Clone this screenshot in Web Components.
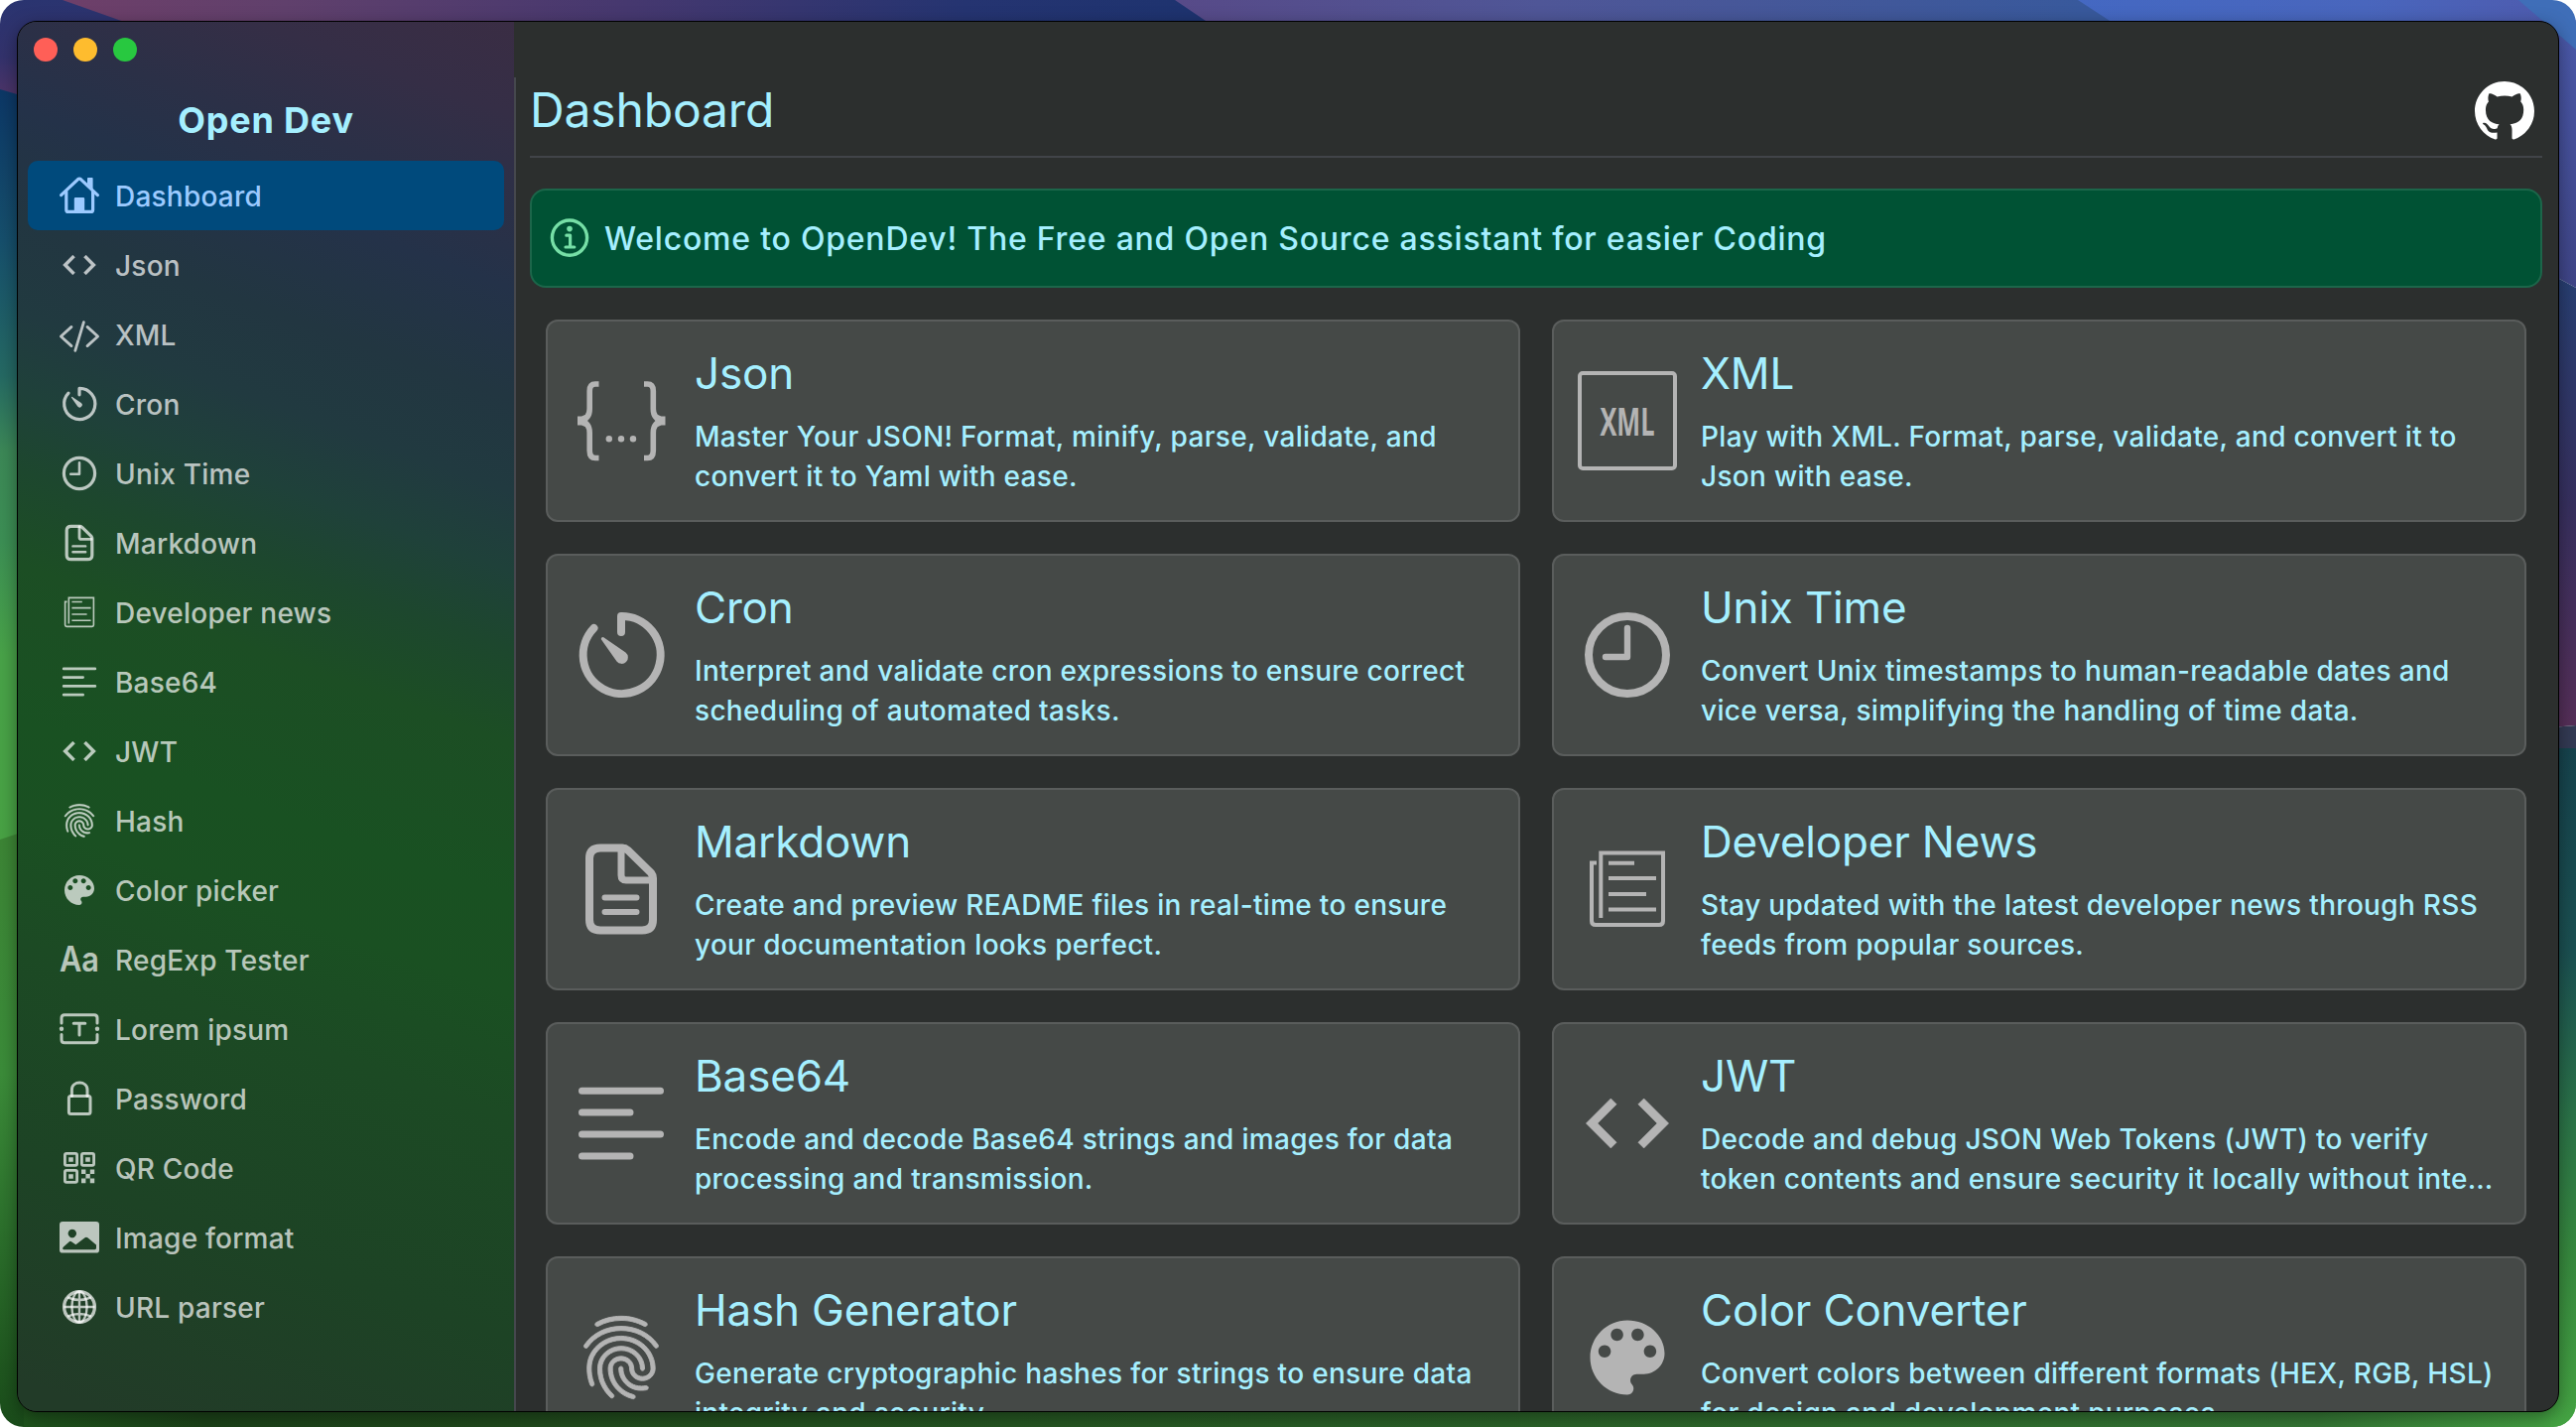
<!DOCTYPE html>
<html lang="en">
<head>
<meta charset="utf-8">
<title>Open Dev</title>
<style>
  html, body { margin: 0; width: 100%; height: 100%; overflow: hidden; background: #fff; }
  body { font-family: Inter, "Liberation Sans", sans-serif; }
</style>
</head>
<body>
<od-desktop>
  <od-window>
    <od-sidebar slot="sidebar" heading="Open Dev">
      <od-nav-item icon="home" active>Dashboard</od-nav-item>
      <od-nav-item icon="code">Json</od-nav-item>
      <od-nav-item icon="code-slash">XML</od-nav-item>
      <od-nav-item icon="timer">Cron</od-nav-item>
      <od-nav-item icon="clock">Unix Time</od-nav-item>
      <od-nav-item icon="document">Markdown</od-nav-item>
      <od-nav-item icon="news">Developer news</od-nav-item>
      <od-nav-item icon="lines">Base64</od-nav-item>
      <od-nav-item icon="code">JWT</od-nav-item>
      <od-nav-item icon="fingerprint">Hash</od-nav-item>
      <od-nav-item icon="palette">Color picker</od-nav-item>
      <od-nav-item icon="letters">RegExp Tester</od-nav-item>
      <od-nav-item icon="textbox">Lorem ipsum</od-nav-item>
      <od-nav-item icon="lock">Password</od-nav-item>
      <od-nav-item icon="qr">QR Code</od-nav-item>
      <od-nav-item icon="image">Image format</od-nav-item>
      <od-nav-item icon="globe">URL parser</od-nav-item>
    </od-sidebar>
    <od-page heading="Dashboard">
      <od-alert slot="notice">Welcome to OpenDev! The Free and Open Source assistant for easier Coding</od-alert>
      <od-card icon="json" heading="Json">Master Your JSON! Format, minify, parse, validate, and<br>convert it to Yaml with ease.</od-card>
      <od-card icon="xml" heading="XML">Play with XML. Format, parse, validate, and convert it to<br>Json with ease.</od-card>
      <od-card icon="timer" heading="Cron">Interpret and validate cron expressions to ensure correct<br>scheduling of automated tasks.</od-card>
      <od-card icon="clock" heading="Unix Time">Convert Unix timestamps to human-readable dates and<br>vice versa, simplifying the handling of time data.</od-card>
      <od-card icon="document" heading="Markdown">Create and preview README files in real-time to ensure<br>your documentation looks perfect.</od-card>
      <od-card icon="news" heading="Developer News">Stay updated with the latest developer news through RSS<br>feeds from popular sources.</od-card>
      <od-card icon="lines" heading="Base64">Encode and decode Base64 strings and images for data<br>processing and transmission.</od-card>
      <od-card icon="code" heading="JWT">Decode and debug JSON Web Tokens (JWT) to verify<br>token contents and ensure security it locally without inte…</od-card>
      <od-card icon="fingerprint" heading="Hash Generator">Generate cryptographic hashes for strings to ensure data<br>integrity and security.</od-card>
      <od-card icon="palette" heading="Color Converter">Convert colors between different formats (HEX, RGB, HSL)<br>for design and development purposes.</od-card>
    </od-page>
  </od-window>
</od-desktop>

<script>
const S = (w, extra = '') => `fill="none" stroke="currentColor" stroke-width="${w}" stroke-linecap="round" stroke-linejoin="round" ${extra}`;
const ICONS = {
  home: `<g ${S(8)}><path d="M4 49 46 9.5Q50 6 54 9.5L96 49"/><path d="M17 40V86Q17 91 22 91H79Q84 91 84 86V40"/></g><path fill="currentColor" d="M37 91V58Q37 55 40 55H60Q63 55 63 58V91ZM70 20V7Q70 5 72 5H82Q84 5 84 7V36Z"/>`,
  code: `<path fill="currentColor" transform="scale(4.1667)" stroke="currentColor" stroke-width=".12" d="M9.4 16.6 4.8 12l4.6-4.6L8 6l-6 6 6 6zm5.2 0 4.6-4.6-4.6-4.6L16 6l6 6-6 6z"/>`,
  'code-slash': `<g ${S(7)}><path d="M30 31 3.5 55 30 79M70 31 96.500 55 70 79M61 19 39.500 91"/></g>`,
  timer: `<path ${S(8)} d="M22.500 23A39 39 0 1 0 50 11V27"/><path fill="currentColor" d="M45.500 56.500 30 34.600a1.700 1.700 0 0 1 2.300-2.300L54.500 47.500a6.400 6.400 0 1 1-9 9z"/>`,
  clock: `<circle cx="50" cy="50" r="39" ${S(8)}/><path ${S(6.4)} d="M50 23V52H28"/>`,
  document: `<path ${S(8)} d="M51 8.500H29Q18 8.500 18 19V81Q18 91.500 29 91.500H71Q82 91.500 82 81V39Q82 36 80 33.500L57 11Q54 8.500 51 8.500"/><path ${S(7)} d="M50 10V36Q50 41 55 41H80"/><path ${S(6)} d="M33.500 58.500H65.500M33.500 73H65.500"/>`,
  news: `<path fill="none" stroke="currentColor" stroke-width="4" d="M19 23.500H14V82Q14 86 18 86H82Q86 86 86 82V13.500H23.300V79M31 23.700H57M31 39H79M31 55H69M31 70.500H79"/>`,
  lines: `<path ${S(7)} d="M10.500 17.200H89.500M10.500 39H59M10.500 61H89.500M10.500 83H59"/>`,
  fingerprint: `<path fill="currentColor" stroke="currentColor" stroke-width=".22" transform="scale(4.1667)" d="M17.810 4.470c-.08 0-.16-.02-.23-.06C15.660 3.420 14 3 12.010 3c-1.980 0-3.860.47-5.570 1.410-.24.13-.54.04-.68-.2-.13-.24-.04-.55.2-.68C7.820 2.520 9.860 2 12.010 2c2.130 0 3.990.47 6.030 1.520.25.13.34.43.21.67-.09.18-.26.28-.44.28zM3.500 9.720c-.1 0-.2-.03-.29-.09-.23-.16-.28-.47-.12-.7.99-1.400 2.250-2.500 3.750-3.270C9.980 4.040 14 4.030 17.150 5.650c1.500.77 2.760 1.860 3.750 3.250.16.22.11.54-.12.7-.23.16-.54.11-.7-.12-.9-1.260-2.040-2.250-3.390-2.940-2.870-1.470-6.540-1.470-9.400.01-1.360.7-2.500 1.700-3.400 2.960-.08.14-.23.21-.39.21zm6.250 12.070c-.13 0-.26-.05-.35-.15-.87-.87-1.340-1.430-2.010-2.640-.69-1.230-1.050-2.730-1.050-4.340 0-2.970 2.540-5.390 5.660-5.390s5.660 2.420 5.660 5.390c0 .28-.22.5-.5.5s-.5-.22-.5-.5c0-2.420-2.090-4.390-4.660-4.390-2.570 0-4.660 1.970-4.660 4.390 0 1.440.32 2.770.93 3.850.64 1.150 1.080 1.640 1.850 2.420.19.2.19.51 0 .71-.11.1-.24.15-.37.15zm7.170-1.850c-1.190 0-2.240-.3-3.100-.89-1.490-1.010-2.380-2.650-2.380-4.390 0-.28.22-.5.5-.5s.5.22.5.5c0 1.410.72 2.740 1.940 3.560.71.48 1.540.71 2.540.71.24 0 .64-.03 1.040-.1.27-.05.53.13.58.41.05.27-.13.53-.41.58-.57.11-1.070.12-1.210.12zM14.910 22c-.04 0-.09-.01-.13-.02-1.590-.44-2.630-1.030-3.720-2.100-1.400-1.390-2.170-3.240-2.170-5.220 0-1.620 1.380-2.940 3.080-2.940 1.700 0 3.080 1.320 3.080 2.940 0 1.070.93 1.940 2.080 1.940s2.080-.87 2.080-1.940c0-3.770-3.250-6.830-7.250-6.830-2.840 0-5.440 1.580-6.610 4.030-.39.81-.59 1.760-.59 2.800 0 .78.07 2.010.67 3.610.1.26-.03.55-.29.64-.26.1-.55-.04-.64-.29-.49-1.310-.73-2.610-.73-3.960 0-1.200.23-2.290.68-3.240 1.330-2.790 4.280-4.600 7.510-4.600 4.550 0 8.250 3.510 8.250 7.830 0 1.620-1.380 2.940-3.080 2.940s-3.080-1.320-3.080-2.940c0-1.070-.93-1.940-2.080-1.940s-2.080.87-2.080 1.940c0 1.710.66 3.310 1.870 4.510.95.94 1.860 1.460 3.270 1.850.27.07.42.35.35.61-.05.23-.26.38-.47.38z"/>`,
  palette: `<path fill="currentColor" transform="scale(4.1667)" d="M12 3c-4.970 0-9 4.030-9 9s4.030 9 9 9c.83 0 1.500-.67 1.500-1.500 0-.39-.15-.74-.39-1.010-.23-.26-.38-.61-.38-.99 0-.83.67-1.500 1.500-1.500H16c2.760 0 5-2.240 5-5 0-4.420-4.030-8-9-8zm-5.500 9c-.83 0-1.500-.67-1.500-1.500S5.670 9 6.500 9 8 9.670 8 10.500 7.330 12 6.500 12zm3-4C8.670 8 8 7.330 8 6.500S8.670 5 9.500 5s1.500.67 1.500 1.500S10.330 8 9.500 8zm5 0c-.83 0-1.500-.67-1.500-1.500S13.670 5 14.500 5s1.500.67 1.500 1.500S15.330 8 14.500 8zm3 4c-.83 0-1.500-.67-1.500-1.500S16.670 9 17.500 9s1.500.67 1.500 1.500-.67 1.500-1.500 1.500z"/>`,
  letters: `<text x="0" y="81" font-family="Inter" font-weight="600" font-size="88" textLength="100" lengthAdjust="spacingAndGlyphs" letter-spacing="0" fill="currentColor">Aa</text>`,
  textbox: `<g ${S(7.5)}><path d="M5 35V22Q5 14.500 12.500 14.500H87.500Q95 14.500 95 22V35M5 64V77Q5 84.500 12.500 84.500H87.500Q95 84.500 95 77V64M35.500 35.500H64.500M50 35.500V65"/></g><circle cx="5" cy="49.500" r="5.500" fill="currentColor"/><circle cx="95" cy="49.500" r="5.500" fill="currentColor"/>`,
  lock: `<g ${S(7.5)}><rect x="23.500" y="44" width="54" height="45" rx="5"/><path d="M31 44V28C31 4 70 4 70 28V44"/></g>`,
  qr: `<g fill="none" stroke="currentColor" stroke-width="7"><rect x="13.500" y="13.500" width="30.500" height="30" rx="4"/><rect x="56" y="13.500" width="30.500" height="30" rx="4"/><rect x="13.500" y="56" width="30.500" height="30" rx="4"/></g><path fill="currentColor" d="M23 23h11.500v11.500H23zM65.500 23H77v11.500H65.500zM23 65.500h11.500V77H23zM55 54h11v11H55zM77 54h11v11H77zM66 65h11v11H66zM55 76h11v12H55zM77 76h11v12H77z"/>`,
  image: `<path fill="currentColor" fill-rule="evenodd" d="M8 10H92Q100 10 100 18V81Q100 89 92 89H8Q0 89 0 81V18Q0 10 8 10ZM32 29.500a10.500 10.500 0 1 0 .01 0ZM8 78Q8 80.500 11 80.500H89Q92.500 80.500 92.500 76V69L71 50.500Q67 47.500 63 51L41 68 30 60.500Q27 58.500 24 61L10 74Q8 76 8 78Z"/>`,
  globe: `<g fill="none" stroke="currentColor" stroke-width="6"><circle cx="50" cy="50" r="38.500" stroke-width="8.500"/><ellipse cx="50" cy="50" rx="19" ry="39"/><path d="M50 11V89M11 50H89M20 26Q50 39 80 26M20 74Q50 61 80 74"/></g>`,
  json: `<g fill="none" stroke="currentColor" stroke-width="5.600"><path d="M27.500 13H24Q18.200 13 18.200 20V38Q18.200 48 9 50Q18.200 52 18.200 62V80Q18.200 87.500 24 87.500H27.500M73 13H76.500Q82.300 13 82.300 20V38Q82.300 48 91.500 50Q82.300 52 82.300 62V80Q82.300 87.500 76.500 87.500H73"/></g><path fill="currentColor" d="M6 45.500H10L16 43V57L10 54.500H6ZM94.500 45.500H90.500L84.500 43V57L90.500 54.500H94.500Z"/><g fill="currentColor"><circle cx="37.800" cy="68.300" r="3.200"/><circle cx="50" cy="68.300" r="3.200"/><circle cx="62" cy="68.300" r="3.200"/></g>`,
  xml: `<rect x="2" y="2" width="96" height="96" rx="3" fill="none" stroke="currentColor" stroke-width="4"/><text x="22.500" y="64.500" font-family="Open Sans" font-weight="700" font-size="38.500" textLength="55" lengthAdjust="spacingAndGlyphs" fill="currentColor">XML</text>`,
  info: `<circle cx="50" cy="49" r="44" ${S(8.5)}/><circle cx="50" cy="26.500" r="7" fill="currentColor"/><path ${S(8)} d="M42 43H51.500V72M40 72.500H62"/>`,
  github: `<path fill="currentColor" transform="scale(6.25)" d="M8 0C3.580 0 0 3.580 0 8c0 3.540 2.290 6.530 5.470 7.590.4.07.55-.17.55-.38 0-.19-.01-.82-.01-1.490-2.010.37-2.530-.49-2.690-.94-.09-.23-.48-.94-.82-1.130-.28-.15-.68-.52-.01-.53.63-.01 1.080.58 1.230.82.72 1.210 1.870.87 2.330.66.07-.52.28-.87.51-1.070-1.780-.2-3.640-.89-3.640-3.950 0-.87.31-1.590.82-2.150-.08-.2-.36-1.020.08-2.120 0 0 .67-.21 2.200.82.64-.18 1.320-.27 2-.27s1.360.09 2 .27c1.530-1.040 2.200-.82 2.200-.82.44 1.100.16 1.920.08 2.120.51.56.82 1.270.82 2.150 0 3.070-1.870 3.750-3.650 3.950.29.25.54.73.54 1.480 0 1.070-.01 1.930-.01 2.200 0 .21.15.46.55.38A8.010 8.010 0 0 0 16 8c0-4.420-3.580-8-8-8z"/>`
};

/* Attaches an open shadow root holding the given markup. */
class OdElement extends HTMLElement {
  connectedCallback() {
    if (!this.shadowRoot) this.attachShadow({ mode: 'open' }).innerHTML = this.render();
  }
}

customElements.define('od-icon', class extends OdElement {
  render() {
    return `<style>:host{display:block;flex:none;letter-spacing:0}svg{display:block;width:100%;height:100%;overflow:visible}</style>
      <svg viewBox="0 0 100 100">${ICONS[this.getAttribute('name')] || ''}</svg>`;
  }
});

customElements.define('od-desktop', class extends OdElement {
  render() {
    const grad = (id, x1, y1, x2, y2, stops) =>
      `<linearGradient id="${id}" gradientUnits="userSpaceOnUse" x1="${x1}" y1="${y1}" x2="${x2}" y2="${y2}">` +
      stops.map(([o, c]) => `<stop offset="${o}" stop-color="${c}"/>`).join('') + '</linearGradient>';
    return `<style>
      :host{display:block;position:relative;box-sizing:border-box;width:2596px;height:1438px;padding:21px 17px 15px;border-radius:24px;overflow:hidden}
      svg{position:absolute;inset:0}
      ::slotted(*){position:relative}
    </style>
    <svg width="2596" height="1438" viewBox="0 0 2596 1438" aria-hidden="true"><defs>
      ${grad('t1', 60, 0, 1200, 0, [[0,'#6e3f69'],[.2,'#60406c'],[.5,'#46386f'],[.8,'#253471'],[1,'#1e336f']])}
      ${grad('t2', 1184, 0, 2100, 0, [[0,'#574a88'],[.4,'#4f5697'],[1,'#38599c']])}
      ${grad('t3', 2090, 0, 2580, 0, [[0,'#4468c2'],[.6,'#4966bd'],[1,'#4e5bae']])}
      ${grad('l1', 0, 0, 0, 95, [[0,'#2a3470'],[.6,'#33326c'],[1,'#4c3468']])}
      ${grad('l2', 0, 90, 0, 850, [[0,'#0c3766'],[.2,'#164f6c'],[.38,'#256963'],[.48,'#3c8857'],[.6,'#3c8f54'],[.75,'#48a248'],[1,'#48a244']])}
      ${grad('l3', 0, 845, 0, 1438, [[0,'#3c8535'],[.4,'#3b8c39'],[.7,'#2a6c2a'],[1,'#1a4c1a']])}
      ${grad('r1', 0, 40, 0, 290, [[0,'#4a58a8'],[1,'#3f4587']])}
      ${grad('r2', 0, 280, 0, 735, [[0,'#283f72'],[.5,'#37305f'],[1,'#562f58']])}
      ${grad('r3', 0, 750, 0, 1438, [[0,'#16434d'],[.3,'#1b5052'],[.55,'#2b7348'],[.75,'#37893e'],[1,'#45a443']])}
      ${grad('b1', 0, 0, 2596, 0, [[0,'#1f561d'],[.08,'#1c4219'],[.3,'#23501f'],[.6,'#2b6329'],[.9,'#357735'],[1,'#45a443']])}
      </defs>
      <rect x="24" y="1415" width="2572" height="23" fill="url(#b1)"/>
      <path d="M0 0H180V22H40V100H0Z" fill="url(#l1)"/>
      <path d="M63 0H1190L1220 23H128Z" fill="url(#t1)"/>
      <path d="M1184 0H2100L2140 23H1218Z" fill="url(#t2)"/>
      <path d="M2094 0H2560L2590 30H2140Z" fill="url(#t3)"/>
      <path d="M2560 20H2596V290L2570 276Z" fill="url(#r1)"/>
      <path d="M2538 0H2596V50Z" fill="#3f6eb8"/>
      <path d="M2570 276 2596 290V731L2570 733Z" fill="url(#r2)"/>
      <path d="M2570 733 2596 731V754H2570Z" fill="#333a54"/>
      <path d="M2570 754H2596V1438H2570Z" fill="url(#r3)"/>
      <path d="M0 90 24 97V840L0 848Z" fill="url(#l2)"/>
      <path d="M0 846 24 838V1438H0Z" fill="url(#l3)"/>
    </svg><slot></slot>`;
  }
});

customElements.define('od-window', class extends OdElement {
  render() {
    return `<style>
      :host{display:flex;box-sizing:border-box;height:1402px;border:1px solid #000;border-radius:20px;overflow:hidden;background:#2c2f2e;box-shadow:0 5px 18px rgba(0,0,0,.38)}
      slot[name=sidebar]::slotted(*){flex:none;width:500px}
      main{flex:1;min-width:0;display:flex}
      .rule{width:2px;margin-top:56px;background:#45474d}
      .content{flex:1;min-width:0}
    </style>
    <slot name="sidebar"></slot><main><div class="rule"></div><div class="content"><slot></slot></div></main>`;
  }
});

customElements.define('od-sidebar', class extends OdElement {
  render() {
    return `<style>
      :host{display:flex;flex-direction:column;box-sizing:border-box;padding:16px 10px 0;
        background:linear-gradient(200deg,#3a2d44 0,#352e46 6%,#2b3047 12%,#243249 17%,#223641 24%,#213a40 30%,#1f413a 35%,#1d472e 40%,#1c4e24 46%,#195122 56%,#1a5022 62%,#1c4a24 70%,#1d4325 84%,#223b28 98%)}
      .lights{display:flex;gap:16px;padding-left:6px}
      .lights i{width:24px;height:24px;border-radius:50%}
      h1{margin:28px 0 10px;text-align:center;font-size:36px;line-height:62px;font-weight:700;color:#a5efff;letter-spacing:.8px}
      nav{display:flex;flex-direction:column}
    </style>
    <div class="lights"><i style="background:#ff5f57"></i><i style="background:#febc2e"></i><i style="background:#28c840"></i></div>
    <h1>${this.getAttribute('heading')}</h1><nav><slot></slot></nav>`;
  }
});

customElements.define('od-nav-item', class extends OdElement {
  render() {
    return `<style>
      :host{display:flex;align-items:center;gap:16px;box-sizing:border-box;height:70px;padding-left:32px;border-radius:10px;color:rgba(255,255,255,.7);font-size:28px;font-weight:450;letter-spacing:.22px;white-space:nowrap}
      :host([active]){background:#004a7c;color:#9ccaff}
      od-icon{width:40px;height:40px}
      span{line-height:40px;padding-top:2px}
    </style><od-icon name="${this.getAttribute('icon')}"></od-icon><span><slot></slot></span>`;
  }
});

customElements.define('od-page', class extends OdElement {
  render() {
    return `<style>
      :host{display:flex;flex-direction:column;padding:56px 16px 0 14px;color:#a5efff}
      header{display:flex;justify-content:space-between;align-items:center;box-sizing:border-box;height:81px;padding:0 8px 12px 0;border-bottom:2px solid #414449}
      h2{margin:0;font-size:48px;line-height:60px;font-weight:400;letter-spacing:-.15px;padding-bottom:2px}
      od-icon{width:60px;height:60px;color:#fff}
      .notice{padding:31px 0 32px}
      .grid{display:grid;grid-template-columns:1fr 1fr;gap:32px;padding:0 16px}
    </style>
    <header><h2>${this.getAttribute('heading')}</h2><od-icon name="github"></od-icon></header>
    <div class="notice"><slot name="notice"></slot></div>
    <div class="grid"><slot></slot></div>`;
  }
});

customElements.define('od-alert', class extends OdElement {
  render() {
    return `<style>
      :host{display:flex;align-items:center;gap:15px;box-sizing:border-box;height:100px;padding:0 18px;border:2px solid #1c664a;border-radius:16px;background:#005234;font-size:32px;font-weight:450;letter-spacing:.78px;white-space:nowrap}
      od-icon{width:40px;height:40px;color:#76dfa6}
      span{line-height:40px;padding-top:1px}
    </style><od-icon name="info"></od-icon><span><slot></slot></span>`;
  }
});

customElements.define('od-card', class extends OdElement {
  render() {
    return `<style>
      :host{display:flex;align-items:center;gap:24px;box-sizing:border-box;height:204px;padding:0 24px;border:2px solid #5a5d5c;border-radius:12px;background:#454947}
      od-icon{width:100px;height:100px;color:#b4b4b4}
      div{min-width:0}
      h3{margin:0 0 17px;font-size:44px;line-height:54px;font-weight:400;letter-spacing:-.18px}
      p{margin:0;font-size:28px;font-weight:450;line-height:40px;letter-spacing:.31px;white-space:nowrap}
    </style><od-icon name="${this.getAttribute('icon')}"></od-icon>
    <div><h3>${this.getAttribute('heading')}</h3><p><slot></slot></p></div>`;
  }
});
</script>
</body>
</html>
